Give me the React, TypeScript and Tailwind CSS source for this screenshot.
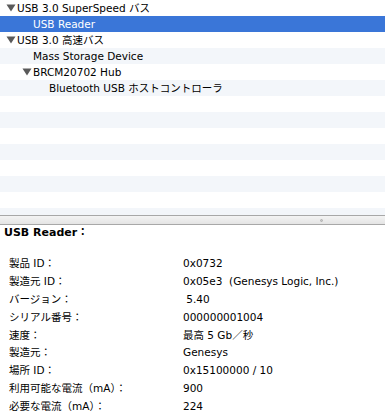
import React from 'react';

type TreeRow = { label: string; depth: number; open?: boolean; selected?: boolean };

const tree: TreeRow[] = [
  { label: 'USB 3.0 SuperSpeed バス', depth: 0, open: true },
  { label: 'USB Reader', depth: 1, selected: true },
  { label: 'USB 3.0 高速バス', depth: 0, open: true },
  { label: 'Mass Storage Device', depth: 1 },
  { label: 'BRCM20702 Hub', depth: 1, open: true },
  { label: 'Bluetooth USB ホストコントローラ', depth: 2 },
];

const details: [string, string][] = [
  ['製品 ID：', '0x0732'],
  ['製造元 ID：', '0x05e3  (Genesys Logic, Inc.)'],
  ['バージョン：', ' 5.40'],
  ['シリアル番号：', '000000001004'],
  ['速度：', '最高 5 Gb／秒'],
  ['製造元：', 'Genesys'],
  ['場所 ID：', '0x15100000 / 10'],
  ['利用可能な電流（mA）：', '900'],
  ['必要な電流（mA）：', '224'],
];

const Disclosure: React.FC<{ light?: boolean }> = ({ light }) => (
  <svg width="10" height="8" viewBox="0 0 10 8" className="shrink-0">
    <path d="M0.5 0.5 L9.5 0.5 L5 7.5 Z" fill={light ? '#ffffff' : '#5a5a5a'} />
  </svg>
);

export default function App() {
  const rowCount = 14;
  const rows = Array.from({ length: rowCount }, (_, i) => tree[i]);

  return (
    <div
      className="w-[385px] h-[418px] overflow-hidden bg-white text-[10.5px] text-black"
      style={{ fontFamily: '"DejaVu Sans", "Noto Sans CJK JP", sans-serif' }}
    >
      {/* Device tree */}
      <div className="h-[215px] overflow-hidden">
        {rows.map((row, i) => {
          const bg = row?.selected ? 'bg-[#3a76d8] text-white' : i % 2 === 1 ? 'bg-[#f3f6fa]' : 'bg-white';
          return (
            <div key={i} className={`h-4 flex items-center ${bg}`}>
              {row && (
                <div
                  className="flex items-center"
                  style={{ paddingLeft: 6 + row.depth * 16 }}
                >
                  {row.open ? <Disclosure light={row.selected} /> : <span className="w-[10px] shrink-0" />}
                  <span className="pl-[1px] leading-4 whitespace-pre">{row.label}</span>
                </div>
              )}
            </div>
          );
        })}
      </div>

      {/* Split view divider */}
      <div className="h-[10px] border-t border-b border-[#a8a8a8] bg-gradient-to-b from-[#f4f4f4] to-[#e4e4e4] flex items-center justify-end pr-[62px]">
        <div className="w-[3px] h-[3px] rounded-full bg-[#c8c8c8] border border-[#b0b0b0]" />
      </div>

      {/* Details */}
      <div className="pl-[4px] pt-[1px]">
        <div className="font-bold leading-[14px] text-[11px]">USB Reader：</div>
        <div className="pt-[15px] pl-[5px]">
          {details.map(([k, v]) => (
            <div key={k} className="flex h-[17.875px] items-center">
              <span className="w-[174px] shrink-0 whitespace-pre">{k}</span>
              <span className="whitespace-pre">{v}</span>
            </div>
          ))}
        </div>
      </div>
    </div>
  );
}
